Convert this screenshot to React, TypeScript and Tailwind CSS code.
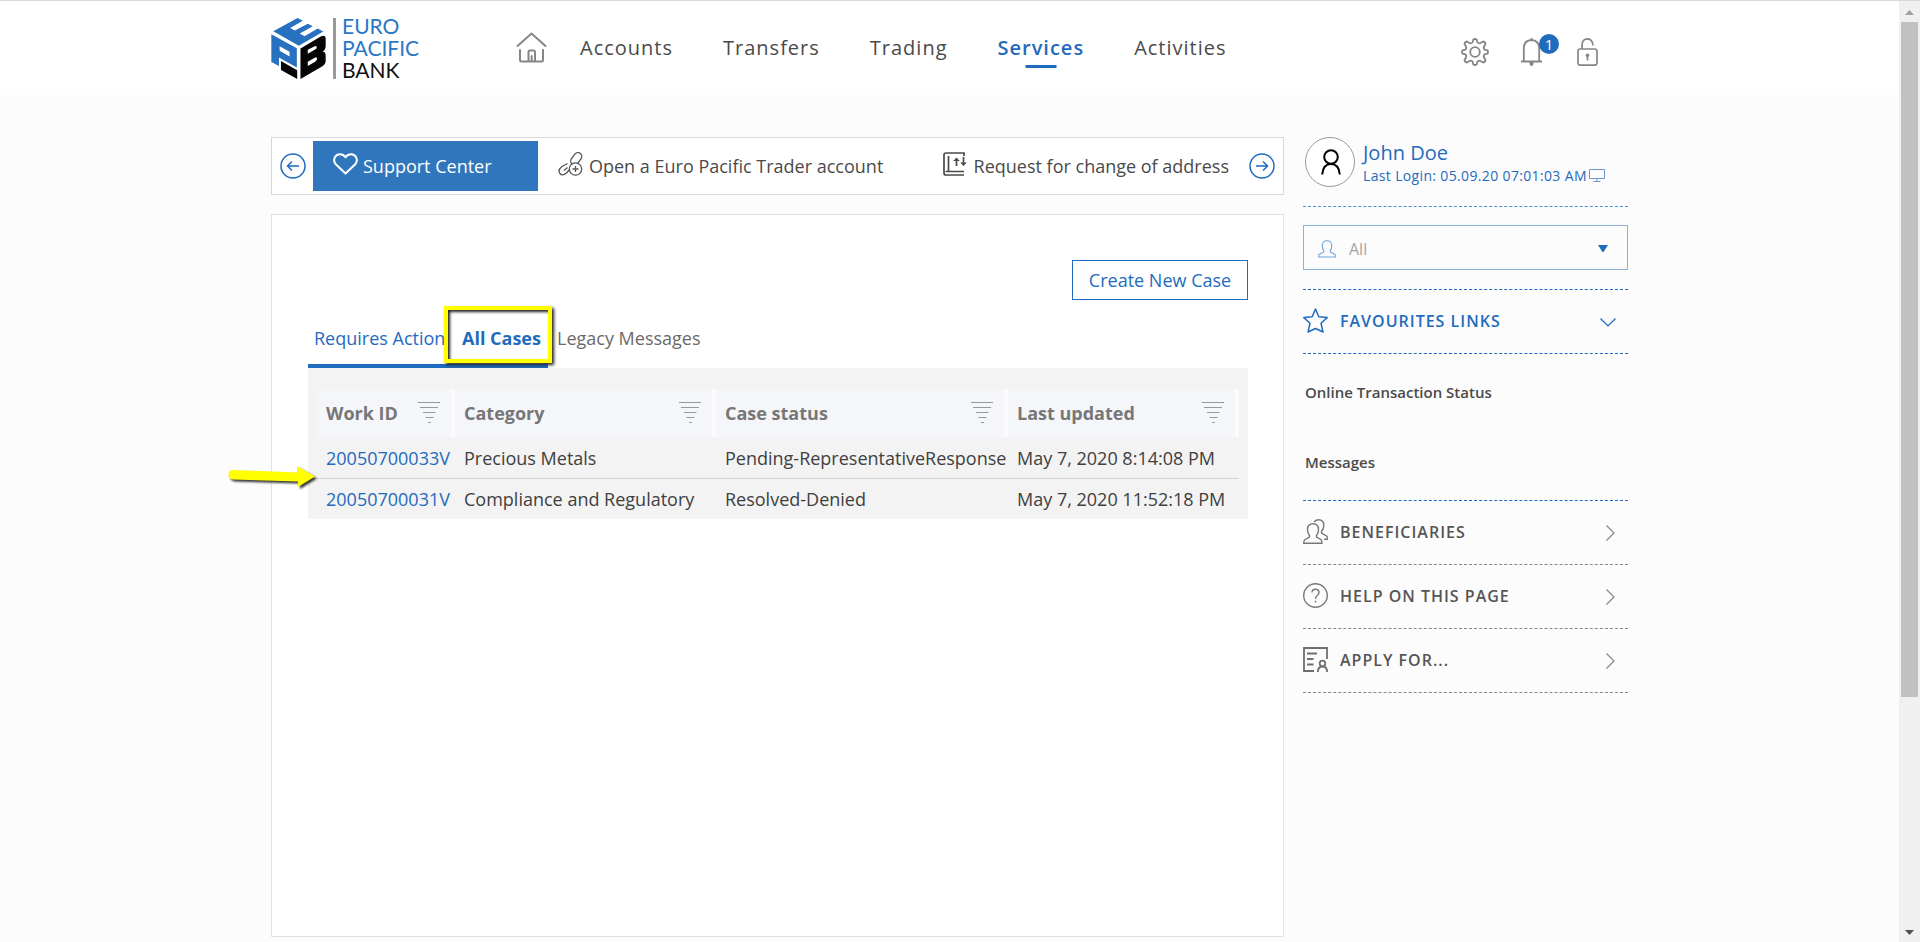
import React from "react"

type IconProps = { className?: string }

const navLinks = ["Accounts", "Transfers", "Trading", "Services", "Activities"]

const cases = [
    { id: "20050700033V", category: "Precious Metals", status: "Pending-RepresentativeResponse", updated: "May 7, 2020 8:14:08 PM" },
    { id: "20050700031V", category: "Compliance and Regulatory", status: "Resolved-Denied", updated: "May 7, 2020 11:52:18 PM" },
]

const columns = [
    { title: "Work ID", width: "w-[138px]" },
    { title: "Category", width: "w-[261px]" },
    { title: "Case status", width: "w-[292px]" },
    { title: "Last updated", width: "w-auto" },
]

function LogoCube() {
    return (
        <svg viewBox="8 7 166 184" className="h-[61px] w-[55px] shrink-0" aria-hidden="true">
            <g fill="#2871c0">
                <path d="M15 47 88 7 104 15 66 37 80 45 119 24 134 32 95 54 109 62 149 39 166 48 92 91Z" />
                <path fillRule="evenodd" d="M9 56 86 98V156L32 126V152L9 140ZM34 92V106L64 123V109Z" />
            </g>
            <g fill="#050505">
                <path d="M38 137 87 165V191L38 164Z" />
                <path fillRule="evenodd" d="M97 99 158 63Q173 56 173 70V90Q173 104 163 109 173 108 173 120V136Q173 147 162 153L97 191ZM119 103V115L140 103Q146 100 146 96 146 89 140 92ZM119 139V152L140 140Q147 136 147 131 147 123 140 127Z" />
            </g>
        </svg>
    )
}

function HomeIcon() {
    return (
        <svg viewBox="0 0 31 31" className="h-[31px] w-[31px]" fill="none" stroke="#868686" strokeWidth="2" strokeLinecap="round" strokeLinejoin="round" aria-hidden="true">
            <path d="M1.5 14 15.500 1.500 29.500 14M4 18V28Q4 29.500 5.500 29.500H25.500Q27 29.500 27 28V18M12.500 29V20Q12.500 18.500 14 18.500H17.500Q19 18.500 19 20V29M15.700 24V29" />
        </svg>
    )
}

function GearIcon() {
    return (
        <svg viewBox="0 0 28 28" className="h-7 w-7" fill="none" stroke="#868686" strokeWidth="1.800" strokeLinejoin="round" aria-hidden="true">
            <circle cx="14" cy="14" r="4.800" />
            <path d="M12.300 1.500Q14 .5 15.700 1.500L16.400 4.400Q18 5.800 19.600 5L22 3.500Q24.500 4 24.500 6L23 8.400Q22.200 10 23.600 11.600L26.500 12.300Q27.500 14 26.500 15.700L23.600 16.400Q22.200 18 23 19.600L24.500 22Q24.500 24 22 24.500L19.600 23Q18 22.200 16.400 23.600L15.700 26.500Q14 27.500 12.300 26.500L11.600 23.600Q10 22.200 8.400 23L6 24.500Q3.500 24 3.500 22L5 19.600Q5.800 18 4.400 16.400L1.500 15.700Q.5 14 1.500 12.300L4.400 11.600Q5.800 10 5 8.400L3.500 6Q3.500 4 6 3.500L8.400 5Q10 5.800 11.600 4.400Z" />
        </svg>
    )
}

function BellIcon() {
    return (
        <svg viewBox="0 0 21 28" className="h-7 w-[21px]" fill="none" stroke="#868686" strokeWidth="1.800" aria-hidden="true">
            <path d="M0 23.500H21M2.800 23.500V10Q3 2.500 10.500 2 18 2.500 18.200 10V23.500M10.500 0V2" />
            <path d="M8.500 24H12.500V26Q12 28 10.500 28 9 28 8.500 26Z" fill="#868686" stroke="none" />
        </svg>
    )
}

function LockIcon() {
    return (
        <svg viewBox="0 0 21 28" className="h-7 w-[21px]" fill="none" stroke="#868686" strokeWidth="1.700" aria-hidden="true">
            <rect x="1" y="11" width="19" height="16.200" rx="2.200" />
            <path d="M5 11V6.500Q5.500 1 10.500 .9 15.500 1 16 7.500" />
            <circle cx="10.500" cy="17.200" r="1.800" fill="#868686" stroke="none" />
            <path d="M10.500 17V22.500" />
        </svg>
    )
}

function ArrowCircle({ left }: { left?: boolean }) {
    return (
        <svg viewBox="0 0 26 26" className="h-[26px] w-[26px]" fill="none" stroke="#1f6bbd" strokeWidth="1.500" aria-hidden="true">
            <circle cx="13" cy="13" r="12" />
            {left
                ? <path d="M19 13H7.500M12 8.500 7.500 13 12 17.500" />
                : <path d="M7 13H18.500M14 8.500 18.500 13 14 17.500" />}
        </svg>
    )
}

function HeartIcon() {
    return (
        <svg viewBox="0 0 25 22" className="-mt-1 h-[22px] w-[25px]" fill="none" stroke="#fff" strokeWidth="2" strokeLinejoin="round" aria-hidden="true">
            <path d="M12.500 20.500 2.500 11C-.5 7 2 1.200 6.800 1.200 9.500 1.200 11.500 2.600 12.500 4.200 13.500 2.600 15.500 1.200 18.200 1.200 23 1.200 25.500 7 22.500 11Z" />
        </svg>
    )
}

function LinkPlusIcon() {
    return (
        <svg viewBox="0 0 25 24" className="-mt-1 h-6 w-[25px]" fill="none" stroke="#555" strokeWidth="1.300" aria-hidden="true">
            <rect x="11.500" y="3" width="13.500" height="7.600" rx="3.800" transform="rotate(-55 18.200 6.800)" />
            <path d="M9.500 11.500 4 14.500Q-.5 18 1.800 21.500 4.500 24.500 8.500 21L11 18M6 18.500 9.500 15.500" />
            <circle cx="17.500" cy="17" r="6.200" fill="#fff" />
            <path d="M14.500 17H20.500M17.500 14V20" />
        </svg>
    )
}

function AddressIcon() {
    return (
        <svg viewBox="0 0 24 24" className="-mt-1 h-6 w-6" fill="none" stroke="#4a4a4a" strokeWidth="1.700" aria-hidden="true">
            <path d="M21 4V1H3Q1 1 1 3V21Q1 23 3 23H21M21 19.500H2.500M5.500 4V19" />
            <path d="M13.500 14V7M20.500 5V12" />
            <path d="M10.200 9 13.500 5.500 16.800 9ZM17.200 10.500H23.800L20.500 14Z" fill="#4a4a4a" stroke="none" />
        </svg>
    )
}

function FilterIcon() {
    return (
        <svg viewBox="0 0 22 22" className="h-[22px] w-[22px]" fill="none" stroke="#96989c" aria-hidden="true">
            <path d="M0 .5H22M2 5.500H20M5 10.500H17.500M7.500 15.500H15.500M10 20.500H13" />
        </svg>
    )
}

function AvatarIcon() {
    return (
        <svg viewBox="0 0 20 26" className="ml-0.5 h-[26px] w-5" fill="none" stroke="#000" strokeWidth="2" aria-hidden="true">
            <circle cx="10" cy="8" r="6.800" />
            <path d="M1.200 25.500Q2 15 10 15 18 15 18.800 25.500" />
        </svg>
    )
}

function MonitorIcon() {
    return (
        <svg viewBox="0 0 16 13" className="h-[13px] w-4" fill="none" stroke="#6f92cf" aria-hidden="true">
            <path d="M.5 .5H15.500V9.500H.5ZM8 10V12M4.500 12.500H11.500" />
        </svg>
    )
}

function PersonIcon({ className }: IconProps) {
    return (
        <svg viewBox="0 0 19 19" className={className} fill="none" stroke="#6fa3dc" strokeWidth="1.100" aria-hidden="true">
            <path d="M6 11Q4.500 9 4.500 6 4.500 .8 9.500 .8 14.500 .8 14.500 6 14.500 9 13 11V12.500L17.500 15Q18.400 15.500 18.400 17V18H.6V17Q.6 15.500 1.500 15L6 12.500Z" />
        </svg>
    )
}

function StarIcon() {
    return (
        <svg viewBox="0 0 25 25" className="h-[25px] w-[25px]" fill="none" stroke="#1f6bbd" strokeWidth="1.500" strokeLinejoin="round" aria-hidden="true">
            <path d="M12.500 1 15.800 8.800 24.200 9.600 18 15.300 20 24 12.500 20.500 5 24 7 15.300 .8 9.600 9.200 8.800Z" />
        </svg>
    )
}

function PeopleIcon() {
    return (
        <svg viewBox="0 0 25 25" className="h-[25px] w-[25px]" fill="none" stroke="#777" strokeWidth="1.400" aria-hidden="true">
            <path d="M6.500 16.500Q4.500 14 4.500 10.500 4.500 4.700 10 4.700 15.500 4.700 15.500 10.500 15.500 14 13.500 16.500V18L18 20.500Q19 21.500 19 24.300H.7Q.7 21.500 2 20.500L6.500 18Z" />
            <path d="M11 3Q12.500 .7 15.500 .7 20.800 .7 20.800 6.500 20.800 9.500 18.500 12.500V14L23.500 17Q24.500 17.500 24.300 20.300H21" />
        </svg>
    )
}

function HelpIcon() {
    return (
        <svg viewBox="0 0 25 25" className="h-[25px] w-[25px]" fill="none" stroke="#777" strokeWidth="1.400" aria-hidden="true">
            <circle cx="12.500" cy="12.500" r="11.800" />
            <path d="M9 9.500Q9 6.200 12.500 6.200 16 6.200 16 9.500 16 11 14.200 12.500 12.500 13.800 12.500 16M12.500 17.800V19.500" />
        </svg>
    )
}

function ApplyIcon() {
    return (
        <svg viewBox="0 0 25 25" className="h-[25px] w-[25px]" fill="none" stroke="#6f6f6f" strokeWidth="1.800" aria-hidden="true">
            <path d="M11 24H1V1H24V12M4 6.500H14M4 12H10.500M4 17.500H10.500" />
            <circle cx="19.500" cy="16.500" r="2.800" />
            <path d="M14.800 25Q15 19.500 19.500 19.500 24 19.500 24.200 25" />
        </svg>
    )
}

function Chevron({ open }: { open?: boolean }) {
    return open ? (
        <svg viewBox="0 0 16 9" className="mt-1 mr-3 ml-auto h-[9px] w-4" fill="none" stroke="#1f6bbd" strokeWidth="1.200" aria-hidden="true">
            <path d="M.5 .5 8 8 15.500 .5" />
        </svg>
    ) : (
        <svg viewBox="0 0 9 16" className="mt-0.5 mr-[13px] ml-auto h-4 w-[9px]" fill="none" stroke="#888" strokeWidth="1.200" aria-hidden="true">
            <path d="M.5 .5 8 8 .5 15.500" />
        </svg>
    )
}

function Header() {
    return (
        <header className="h-[95px] border-t border-[#d8d8de] bg-white">
            <div className="mx-auto flex h-full max-w-[1357px] items-center">
                <a href="#" className="flex w-[152px] shrink-0 items-center" aria-label="Euro Pacific Bank">
                    <LogoCube />
                    <span className="ml-[7px] h-[61px] w-[3px] shrink-0 bg-[#999]" />
                    <span className="ml-1.5 flex flex-col font-['Lato'] text-[21px] leading-[22px] text-[#2b77c7]">
                        <span>EURO</span>
                        <span>PACIFIC</span>
                        <span className="text-[#111]">BANK</span>
                    </span>
                </a>
                <nav className="ml-[93px] flex items-center">
                    <a href="#" className="mr-[33px] pb-0.5" aria-label="Home"><HomeIcon /></a>
                    <ul className="flex gap-[50px] text-[20px] leading-7 tracking-wider text-[#4a4a4a]">
                        {navLinks.map((link) => (
                            <li key={link} className="relative">
                                {link === "Services" ? (
                                    <>
                                        <a href="#" className="font-semibold text-[#1f6bbd]">{link}</a>
                                        <span className="absolute -bottom-1.5 left-1/2 h-[3px] w-[31px] -translate-x-1/2 bg-[#1f6bbd]" />
                                    </>
                                ) : <a href="#">{link}</a>}
                            </li>
                        ))}
                    </ul>
                </nav>
                <div className="mr-[30px] ml-auto flex items-center pt-2">
                    <button aria-label="Settings"><GearIcon /></button>
                    <button className="relative ml-8" aria-label="Notifications">
                        <BellIcon />
                        <span className="absolute -top-1 left-[18px] h-5 w-5 rounded-full bg-[#1f6bbd] text-center text-[15px] leading-5 text-white">1</span>
                    </button>
                    <button className="ml-[35px]" aria-label="Log out"><LockIcon /></button>
                </div>
            </div>
        </header>
    )
}

function ServiceBar() {
    return (
        <div className="flex h-[58px] items-center border border-[#d8d8d8] bg-white text-[18px] text-[#4a4a4a]">
            <button className="ml-2" aria-label="Previous"><ArrowCircle left /></button>
            <a href="#" className="ml-[7px] flex h-[50px] w-[225px] items-center bg-[#3076bd] pl-5 text-white">
                <HeartIcon />
                <span className="ml-[5px]">Support Center</span>
            </a>
            <a href="#" className="ml-5 flex items-center">
                <LinkPlusIcon />
                <span className="ml-[6px]">Open a Euro Pacific Trader account</span>
            </a>
            <a href="#" className="ml-auto flex items-center">
                <AddressIcon />
                <span className="ml-[7px]">Request for change of address</span>
            </a>
            <button className="mr-2 ml-5" aria-label="Next"><ArrowCircle /></button>
        </div>
    )
}

function CaseTable() {
    return (
        <div className="bg-[#f3f3f3] px-[9px] pt-[21px]">
            <table className="w-full table-fixed border-separate border-spacing-0 text-left text-[18px] leading-6">
                <thead>
                    <tr className="h-12">
                        {columns.map((column) => (
                            <th key={column.title} className={`${column.width} border-r-4 border-[#fbfbfc] bg-[#f5f6fa] pr-[11px] pl-[9px] font-bold text-[#777]`}>
                                <div className="flex items-center justify-between">
                                    {column.title}
                                    <button aria-label={`Filter ${column.title}`}><FilterIcon /></button>
                                </div>
                            </th>
                        ))}
                    </tr>
                </thead>
                <tbody>
                    {cases.map((row) => (
                        <tr key={row.id} className="group h-[41px] whitespace-nowrap text-[#404040]">
                            <td className="border-t border-[#cbd3dd] pl-[9px] group-first:border-t-0"><a href="#" className="text-[#1f6bbd]">{row.id}</a></td>
                            <td className="border-t border-[#cbd3dd] pl-[9px] group-first:border-t-0">{row.category}</td>
                            <td className="border-t border-[#cbd3dd] pl-[9px] group-first:border-t-0">{row.status}</td>
                            <td className="border-t border-[#cbd3dd] pl-[9px] group-first:border-t-0">{row.updated}</td>
                        </tr>
                    ))}
                </tbody>
            </table>
        </div>
    )
}

function CasePanel() {
    return (
        <section className="relative mt-[19px] min-h-[723px] border border-[#e2e2e2] bg-white pt-[45px] pr-[35px] pl-9">
            <div className="flex justify-end">
                <button className="h-10 w-44 border border-[#1f6bbd] text-[18px] text-[#1f6bbd]">Create New Case</button>
            </div>
            <div className="flex h-[68px]" role="tablist">
                <div className="flex border-b-4 border-[#1f6bbd] pt-[26px]">
                    <button role="tab" className="h-6 w-[136px] pl-1.5 text-left text-[18px] leading-6 whitespace-nowrap text-[#1f6bbd]">Requires Action</button>
                    <div className="relative w-[104px]">
                        <button role="tab" aria-selected="true" className="h-6 w-full pl-[18px] text-left text-[18px] leading-6 font-bold whitespace-nowrap text-[#1f6bbd]">All Cases</button>
                        <span className="absolute -top-5 left-0 h-[57px] w-[108px] border-4 border-[#ffff00] shadow-[2px_2px_3px_#222,inset_2px_2px_3px_#222]" />
                    </div>
                </div>
                <button role="tab" className="mt-[26px] h-6 pl-[9px] text-[18px] leading-6 text-[#6a6a6a]">Legacy Messages</button>
            </div>
            <CaseTable />
            <svg viewBox="0 0 94 28" className="absolute top-[249px] -left-[46px] h-7 w-[94px] drop-shadow-[2px_2px_1px_#333]" aria-hidden="true">
                <path d="M7 6 71 8.500V2L89 12.500 72 23V17.500L7 15.500Q2.500 15 2.500 10.500 2.500 6 7 6Z" fill="#ffff00" />
            </svg>
        </section>
    )
}

const menus = [
    { title: "BENEFICIARIES", icon: <PeopleIcon /> },
    { title: "HELP ON THIS PAGE", icon: <HelpIcon /> },
    { title: "APPLY FOR...", icon: <ApplyIcon /> },
]

function Sidebar() {
    return (
        <aside className="ml-[19px] w-[325px] shrink-0 text-[#4a4a4a]">
            <div className="flex h-[70px] border-b border-dashed border-[#4a8fd6] text-[#1f6bbd]">
                <div className="ml-0.5 flex h-[50px] w-[50px] items-center justify-center rounded-full border border-[#999] bg-white">
                    <AvatarIcon />
                </div>
                <div className="ml-2 whitespace-nowrap">
                    <p className="pt-0.5 text-[20px] leading-7">John Doe</p>
                    <p className="flex items-center text-[14px] leading-[18px] tracking-wide">
                        Last Login: 05.09.20 07:01:03 AM
                        <span className="ml-0.5 pb-0.5"><MonitorIcon /></span>
                    </p>
                </div>
            </div>
            <div className="relative mt-[18px] h-[45px]">
                <select aria-label="Beneficiary" className="h-full w-full appearance-none border border-[#8ab2dc] bg-transparent pt-0.5 pl-[45px] text-[16px] text-[#a5a5a5]">
                    <option>All</option>
                </select>
                <PersonIcon className="pointer-events-none absolute top-[15px] left-[15px] h-[18px] w-[18px]" />
                <svg viewBox="0 0 10 7" className="pointer-events-none absolute top-5 right-5 h-[7px] w-2.5" aria-hidden="true">
                    <path d="M0 0H10L5.500 7H4.500Z" fill="#1f6bbd" />
                </svg>
            </div>
            <button className="mt-[19px] flex h-[65px] w-full items-center border-y border-dashed border-[#1f6bbd] pb-0.5 text-[16px] font-semibold tracking-[1px] text-[#1f6bbd]">
                <StarIcon />
                <span className="ml-3">FAVOURITES LINKS</span>
                <Chevron open />
            </button>
            <div className="flex h-[147px] flex-col border-b border-dashed border-[#1f6bbd] pt-[27px] pl-0.5 text-[15px] leading-[22px] font-semibold">
                <a href="#">Online Transaction Status</a>
                <a href="#" className="mt-12">Messages</a>
            </div>
            {menus.map((menu) => (
                <button key={menu.title} className="flex h-16 w-full items-center border-b border-dashed border-[#888] pb-0.5 text-[16px] font-semibold tracking-[1px] text-[#555]">
                    {menu.icon}
                    <span className="ml-3">{menu.title}</span>
                    <Chevron />
                </button>
            ))}
        </aside>
    )
}

function Scrollbar() {
    return (
        <div className="sticky top-0 flex h-screen w-[21px] shrink-0 flex-col items-center border-t border-[#d8d8de] bg-[#f0f0f0]" aria-hidden="true">
            <svg viewBox="0 0 21 21" className="h-[21px] w-[21px]"><path d="M6 14H15L10.500 9Z" fill="#a0a0a0" /></svg>
            <div className="h-[675px] max-h-[72%] w-[17px] bg-[#c1c1c1]" />
            <svg viewBox="0 0 21 21" className="mt-auto h-[21px] w-[21px]"><path d="M6 9H15L10.500 14Z" fill="#505050" /></svg>
        </div>
    )
}

function App(): React.ReactElement {
    return (
        <div className="flex min-h-screen bg-[#fcfcfc] font-['Open_Sans',sans-serif]">
            <div className="min-w-0 flex-1">
                <Header />
                <main className="mx-auto mt-[42px] flex max-w-[1357px] items-start">
                    <div className="min-w-0 flex-1">
                        <ServiceBar />
                        <CasePanel />
                    </div>
                    <Sidebar />
                </main>
            </div>
            <Scrollbar />
        </div>
    )
}

export default App
